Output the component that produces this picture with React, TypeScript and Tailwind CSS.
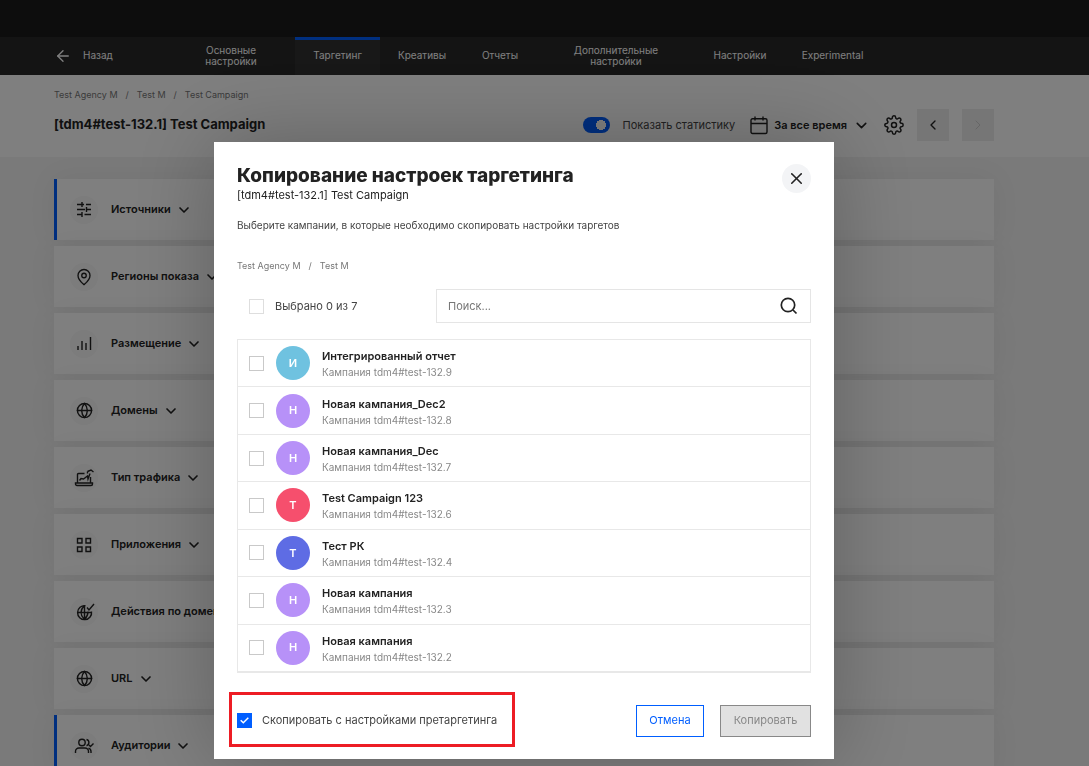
import React, { useState } from 'react';
import { ArrowLeft, ChevronDown, ChevronLeft, ChevronRight, Globe, MapPin, X } from 'lucide-react';
import { FiSettings } from 'react-icons/fi';

const campaigns = [
    { id: '9', name: 'Интегрированный отчет', letter: 'И', color: 'bg-[#6fc2e0]' },
    { id: '8', name: 'Новая кампания_Dec2', letter: 'Н', color: 'bg-[#b791f8]' },
    { id: '7', name: 'Новая кампания_Dec', letter: 'Н', color: 'bg-[#b791f8]' },
    { id: '6', name: 'Test Campaign 123', letter: 'T', color: 'bg-[#f64f6d]' },
    { id: '4', name: 'Тест РК', letter: 'Т', color: 'bg-[#5e6ce4]' },
    { id: '3', name: 'Новая кампания', letter: 'Н', color: 'bg-[#b791f8]' },
    { id: '2', name: 'Новая кампания', letter: 'Н', color: 'bg-[#b791f8]' },
];

const tabs = [
    { label: 'Основные настройки', width: 'w-32 px-8' },
    { label: 'Таргетинг', width: 'w-[85px]', active: true },
    { label: 'Креативы', width: 'w-[84px]' },
    { label: 'Отчеты', width: 'w-[72px]' },
    { label: 'Дополнительные настройки', width: 'w-40 px-8' },
    { label: 'Настройки', width: 'w-[88px]' },
    { label: 'Experimental', width: 'w-[97px]' },
];

const Glyph: React.FC<{ size?: number; children: React.ReactNode }> = ({ size = 18, children }) => (
    <svg width={size} height={size} viewBox="0 0 18 18" fill="none" stroke="currentColor" strokeWidth="1.4" className="shrink-0 overflow-visible">
        {children}
    </svg>
);

const SlidersIcon = () => (
    <Glyph>
        <path d="M2 3.500h7M7 1v5M11 3.500h5M2 8.500h8M11.500 6v5M11.500 8.500H16M2 13.500h5M7 11v5M9.500 13.500H16" />
    </Glyph>
);

const BarsIcon = () => (
    <Glyph>
        <path d="M3 11v4M7 6v9M11 8v7M15.500 2v13" />
    </Glyph>
);

const TrafficIcon = () => (
    <Glyph>
        <path d="M9.500 4.500H3.500a1 1 0 0 0-1 1V14h13V8M.500 14h17v1a1.500 1.500 0 0 1-1.500 1.500H2A1.500 1.500 0 0 1 .500 15z" />
        <path d="M4.500 11.500 6 9.500l2.500.500 4-3 .500 3 2-5.500M12.500 2.500 16 1l2.500 2M12.500 2.500v2" />
    </Glyph>
);

const AppsIcon = () => (
    <Glyph>
        <path d="M2.500 2.500h4.500V7H2.500zM11 2.500h4.500V7H11zM2.500 11h4.500v4.500H2.500zM11 11h4.500v4.500H11z" />
    </Glyph>
);

const GlobeCheckIcon = () => (
    <Glyph>
        <path d="M10.500 2.700A7 7 0 1 0 16.500 8.500M2.500 9.500h14M9.500 2.500C5 7 5 12 9.500 16.500M13 8.500c0 3-1 5.500-3.500 8M9.500 2.500v14" />
        <path d="m12 4.500 2 2.500 5-6" />
    </Glyph>
);

const AudienceIcon = () => (
    <Glyph>
        <circle cx="7" cy="5.500" r="3.200" />
        <path d="M.500 16v-1.500A3.500 3.500 0 0 1 4 11h6a3.500 3.500 0 0 1 3.500 3.500V16M11.500 2.500a3.200 3.200 0 0 1 0 6.200M13.500 11.200a3.500 3.500 0 0 1 2.500 3.300V16M14 8l1.500 1.500L18.500 6.500" />
    </Glyph>
);

const CalendarIcon = () => (
    <Glyph>
        <path d="M2.500 2.800h13a1.500 1.500 0 0 1 1.500 1.500V16a1.500 1.500 0 0 1-1.500 1.500h-13A1.500 1.500 0 0 1 1 16V4.300a1.500 1.500 0 0 1 1.500-1.500zM1 7.500h16M5 .500v4M13 .500v4" />
    </Glyph>
);

const SearchIcon = () => (
    <Glyph>
        <circle cx="8" cy="8" r="6.700" strokeWidth="1.700" />
        <path d="m13 13 3.500 3.500" strokeWidth="1.700" />
    </Glyph>
);

const sections = [
    { label: 'Источники', icon: <SlidersIcon />, active: true },
    { label: 'Регионы показа', icon: <MapPin size={18} strokeWidth={1.8} /> },
    { label: 'Размещение', icon: <BarsIcon /> },
    { label: 'Домены', icon: <Globe size={17} strokeWidth={2} /> },
    { label: 'Тип трафика', icon: <TrafficIcon /> },
    { label: 'Приложения', icon: <AppsIcon /> },
    { label: 'Действия по доменам', icon: <GlobeCheckIcon /> },
    { label: 'URL', icon: <Globe size={17} strokeWidth={2} /> },
    { label: 'Аудитории', icon: <AudienceIcon />, active: true },
];

interface CheckboxProps {
    id: string;
    checked: boolean;
    onChange: () => void;
    border?: string;
}

const Checkbox: React.FC<CheckboxProps> = ({ id, checked, onChange, border = 'border-[#c9c9c9]' }) => (
    <span className="grid shrink-0 place-items-center">
        <input
            id={id}
            type="checkbox"
            checked={checked}
            onChange={onChange}
            className={`col-start-1 row-start-1 size-[15px] appearance-none border bg-white checked:border-[#005eff] checked:bg-[#005eff] ${border}`}
        />
        {checked && (
            <svg width="9" height="7" viewBox="0 0 9 7" className="pointer-events-none z-10 col-start-1 row-start-1">
                <path d="M.7 3.200 3.300 5.700 8.300.8" fill="none" stroke="white" strokeWidth="1.500" />
            </svg>
        )}
    </span>
);

const CopyDialog: React.FC = () => {
    const [selected, setSelected] = useState<string[]>([]);
    const [query, setQuery] = useState('');
    const [withPretargeting, setWithPretargeting] = useState(true);

    const toggle = (id: string) => {
        setSelected(prev => (prev.includes(id) ? prev.filter(x => x !== id) : [...prev, id]));
    };

    const toggleAll = () => {
        setSelected(prev => (prev.length === campaigns.length ? [] : campaigns.map(c => c.id)));
    };

    const visible = campaigns.filter(c => c.name.toLowerCase().includes(query.toLowerCase()));

    return (
        <div role="dialog" aria-modal="true" aria-labelledby="copy-title" className="w-full max-w-[620px] bg-white px-[23px] pt-[22px] pb-3 text-[#222] shadow-[0_0_80px_rgba(0,0,0,0.25)]">
            <div className="flex items-start justify-between">
                <div>
                    <h2 id="copy-title" className="text-[19px] leading-6 font-extrabold">Копирование настроек таргетинга</h2>
                    <p className="text-[11px] leading-[14px]">[tdm4#test-132.1] Test Campaign</p>
                </div>
                <button aria-label="Закрыть" className="flex size-[29px] items-center justify-center rounded-full bg-[#f3f4f6]">
                    <X size={19} strokeWidth={2} />
                </button>
            </div>

            <p className="mt-[15px] text-[10px] leading-4 text-[#444]">
                Выберите кампании, в которые необходимо скопировать настройки таргетов
            </p>

            <div className="mt-[25px] flex gap-2 text-[9px] leading-4 text-[#777]">
                <span>Test Agency M</span>
                <span>/</span>
                <span>Test M</span>
            </div>

            <div className="mt-[15px] flex items-center justify-between pl-3">
                <div className="flex items-center gap-[11px]">
                    <Checkbox id="all" checked={selected.length === campaigns.length} onChange={toggleAll} border="border-[#dedede]" />
                    <label htmlFor="all" className="text-[11px] text-[#444]">Выбрано {selected.length} из {campaigns.length}</label>
                </div>
                <div className="flex h-[34px] w-[375px] items-center border border-[#e5e5e5] pr-3 pl-[11px]">
                    <input
                        type="text"
                        aria-label="Поиск"
                        value={query}
                        onChange={e => setQuery(e.target.value)}
                        placeholder="Поиск..."
                        className="min-w-0 flex-1 text-[11px] outline-none placeholder:text-[#777]"
                    />
                    <SearchIcon />
                </div>
            </div>

            <ul className="mt-4 flex h-[334px] flex-col border border-b-2 border-[#e8e8e8]">
                {visible.map(c => (
                    <li key={c.id} className="flex flex-1 items-center border-b border-[#e8e8e8] pl-[11px] last:border-b-0">
                        <Checkbox id={`campaign-${c.id}`} checked={selected.includes(c.id)} onChange={() => toggle(c.id)} />
                        <span className={`ml-3 flex size-[34px] items-center justify-center rounded-full text-[11px] font-semibold text-white ${c.color}`}>
                            {c.letter}
                        </span>
                        <label htmlFor={`campaign-${c.id}`} className="ml-3 flex flex-col pt-0.5">
                            <span className="text-[11px] leading-4 font-semibold">{c.name}</span>
                            <span className="text-[10px] leading-4 text-[#888]">Кампания tdm4#test-132.{c.id}</span>
                        </label>
                    </li>
                ))}
            </ul>

            <div className="mt-[19px] -ml-2 flex items-center justify-between">
                <div className="flex h-[55px] w-[286px] items-center gap-2.5 border-3 border-[#ed1c24] pt-0.5 pl-[5px]">
                    <Checkbox id="pretargeting" checked={withPretargeting} onChange={() => setWithPretargeting(!withPretargeting)} />
                    <label htmlFor="pretargeting" className="text-[11px] text-[#444]">Скопировать с настройками претаргетинга</label>
                </div>
                <div className="flex gap-4 pt-0.5">
                    <button className="h-8 w-[68px] border border-[#005eff] text-[11px] text-[#005eff]">Отмена</button>
                    <button disabled={selected.length === 0} className="h-8 w-[91px] border border-[#888] bg-[#e1e1e1] text-[11px] text-[#888]">Копировать</button>
                </div>
            </div>
        </div>
    );
};

const App: React.FC = () => {
    const [showStats, setShowStats] = useState(true);

    return (
        <div className="h-screen overflow-hidden bg-[#f4f4f4] font-['Inter','Noto_Sans',sans-serif] text-[#222]">
            <div className="h-[37px] bg-[#1a1a1a]"></div>

            <nav className="flex h-[38px] items-stretch bg-[#282828] pl-[54px] text-[10px] text-white">
                <a href="#back" className="flex w-[113px] items-center gap-[11px] pb-px">
                    <ArrowLeft size={18} strokeWidth={1.8} />
                    Назад
                </a>
                {tabs.map(tab => (
                    <a
                        key={tab.label}
                        href="#tab"
                        className={`flex items-center justify-center text-center leading-[11px] ${tab.width} ${tab.active ? 'border-t-3 border-[#005eff] bg-[#303030] pb-1' : 'pb-px'}`}
                    >
                        {tab.label}
                    </a>
                ))}
            </nav>

            <header className="bg-white pr-[95px] pb-4 pl-[54px]">
                <div className="flex gap-2 pt-3 text-[9px] leading-4 text-[#777]">
                    <a href="#agency">Test Agency M</a>
                    <span>/</span>
                    <a href="#client">Test M</a>
                    <span>/</span>
                    <a href="#campaign">Test Campaign</a>
                </div>
                <div className="mt-1.5 flex items-center justify-between">
                    <h1 className="text-[13px] font-bold">[tdm4#test-132.1] Test Campaign</h1>
                    <div className="flex items-center text-[11px]">
                        <input
                            id="stats"
                            type="checkbox"
                            role="switch"
                            checked={showStats}
                            onChange={() => setShowStats(!showStats)}
                            className="h-4 w-[27px] appearance-none rounded-full bg-[#bbb] bg-[radial-gradient(circle_at_9px_8px,white_5px,transparent_5px)] checked:bg-[#005eff] checked:bg-[radial-gradient(circle_at_18px_8px,white_5px,transparent_5px)]"
                        />
                        <label htmlFor="stats" className="ml-[13px] text-[#444]">Показать статистику</label>
                        <button className="ml-[15px] flex items-center gap-1.5 font-semibold">
                            <CalendarIcon />
                            За все время
                            <ChevronDown size={17} strokeWidth={2.2} />
                        </button>
                        <button aria-label="Настройки" className="ml-3.5"><FiSettings size={20} strokeWidth={1.8} /></button>
                        <button aria-label="Предыдущая" className="ml-[13px] flex h-8 w-8 items-center justify-center bg-[#ededed]"><ChevronLeft size={16} /></button>
                        <button aria-label="Следующая" disabled className="ml-[13px] flex h-8 w-8 items-center justify-center bg-[#ededed] text-[#ccc]"><ChevronRight size={16} strokeWidth={1.5} /></button>
                    </div>
                </div>
            </header>

            <main className="mt-[22px] mr-[95px] ml-[54px] flex flex-col gap-1.5">
                {sections.map(s => (
                    <section key={s.label} className={`flex h-[61px] shrink-0 items-center border-l-3 bg-white pl-[13px] shadow-[0_0_30px_rgba(0,0,0,0.06)] ${s.active ? 'border-[#005eff]' : 'border-white'}`}>
                        <span className="flex size-7 items-center justify-center rounded-full bg-[#f8f8f8]">{s.icon}</span>
                        <button className="ml-[13px] flex items-center gap-[5px] text-[11px] font-semibold">
                            {s.label}
                            <ChevronDown size={16} strokeWidth={2.5} />
                        </button>
                    </section>
                ))}
            </main>

            <div className="fixed inset-0 flex items-start justify-center bg-black/50 pt-[142px] pr-[41px]">
                <CopyDialog />
            </div>
        </div>
    );
};

export default App;
